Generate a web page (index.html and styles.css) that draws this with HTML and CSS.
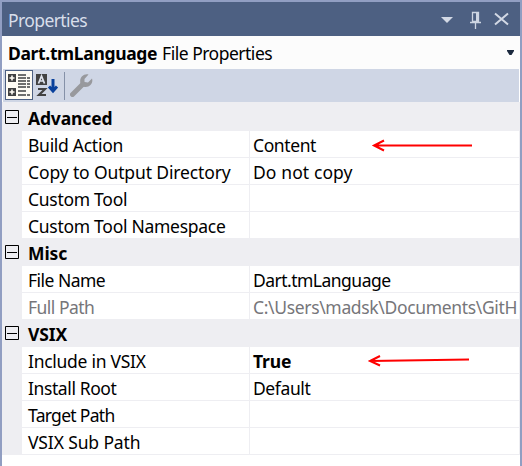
FILE: index.html
```html
<!DOCTYPE html>
<html lang="en">
<head>
<meta charset="utf-8">
<title>Properties</title>
<link rel="stylesheet" href="styles.css">
</head>
<body>
<main class="window">
  <header class="titlebar">
    <h1 class="title">Properties</h1>
    <svg class="controls" width="70" height="18" viewBox="0 0 70 18">
      <path d="M1 6h12L7 12z" fill="#d3d9e5"/>
      <path d="M32.500 1.500h6v9h-6zM30 11.500h11M35.500 12v6" fill="none" stroke="#cdd5e3" stroke-width="1.3"/>
      <path d="M36 1h3v10h-3z" fill="#cdd5e3"/>
      <path d="M55 2.500L68 13.500M68 2.500L55 13.500" stroke="#d3d9e5" stroke-width="2"/>
    </svg>
  </header>
  <div class="selector">
    <span class="object"><b>Dart.tmLanguage</b><span class="kind">File Properties</span></span>
    <svg class="drop" width="7" height="5" viewBox="0 0 7 5"><path d="M0 0h7v1L4.500 5h-2L0 1z" fill="#1b293e"/></svg>
  </div>
  <div class="toolbar">
    <span class="tool selected">
      <svg width="22" height="22" viewBox="0 0 22 22">
        <path d="M0 0h8v8H0zM0 14h8v8H0z" fill="#424242"/>
        <path d="M1.500 4h5M4 1.500v5M1.500 18h5M4 15.500v5" stroke="#fffcf4" stroke-width="1.6"/>
        <path d="M10 1h8M10 4h8M10 7h8M10 10h8M10 13h8M10 17h8M10 21h8" stroke="#424242" stroke-width="1.7"/>
        <path d="M19 4h3M19 7h3M19 10h3M19 13h3M19 21h3" stroke="#424242" stroke-width="1.7"/>
      </svg>
    </span>
    <span class="tool">
      <svg width="23" height="24" viewBox="0 0 23 24">
        <path d="M0 0h11v11H0z" fill="#424242"/>
        <path d="M2.500 9.500L5.500 2L8.500 9.500M3.500 7h4" fill="none" stroke="#dfe3ec" stroke-width="1.7"/>
        <path d="M2 15h7L3 21h7" fill="none" stroke="#424242" stroke-width="2.2"/>
        <path d="M17 5v12M13 12.500l4 4.500 4-4.500" fill="none" stroke="#08409c" stroke-width="3"/>
      </svg>
    </span>
    <i class="separator"></i>
    <svg class="wrench" width="23" height="23" viewBox="0 0 23 23"><path d="M2.500 20.500L13 10" fill="none" stroke="#98999d" stroke-width="5" stroke-linecap="round"/><path d="M18.500 0.500C13 -.5 9 4 10.500 9.500Q11.500 13 15 13C20 13.500 23.500 9 22 4.500L18 8.500L14.500 8L14.500 5z" fill="#98999d"/></svg>
  </div>
  <div class="grid">
    <h2 class="category"><svg class="toggle" width="14" height="14" viewBox="0 0 14 14"><path d="M.5.5h13v13H.5zM2 7.500h10" fill="none" stroke="#000"/></svg>Advanced</h2>
    <div class="row"><span class="name">Build Action</span><span class="value tight">Content<svg class="arrow" width="102" height="14" viewBox="0 0 102 14"><path d="M3 7.500h98M13 2.500L3 7.500L13 12.500" fill="none" stroke="#f00" stroke-width="2"/></svg></span></div>
    <div class="row"><span class="name wide">Copy to Output Directory</span><span class="value wider">Do not copy</span></div>
    <div class="row"><span class="name">Custom Tool</span><span class="value"></span></div>
    <div class="row"><span class="name">Custom Tool Namespace</span><span class="value"></span></div>
    <h2 class="category misc"><svg class="toggle" width="14" height="14" viewBox="0 0 14 14"><path d="M.5.5h13v13H.5zM2 7.500h10" fill="none" stroke="#000"/></svg>Misc</h2>
    <div class="row"><span class="name tighter">File Name</span><span class="value tighter">Dart.tmLanguage</span></div>
    <div class="row readonly"><span class="name tighter">Full Path</span><span class="value path">C:\Users\madsk\Documents\GitH</span></div>
    <h2 class="category misc"><svg class="toggle" width="14" height="14" viewBox="0 0 14 14"><path d="M.5.5h13v13H.5zM2 7.500h10" fill="none" stroke="#000"/></svg>VSIX</h2>
    <div class="row"><span class="name">Include in VSIX</span><span class="value wide"><b>True</b><svg class="arrow low" width="104" height="14" viewBox="0 0 104 14"><path d="M3 8L102 6.500M13 3L3 8L13 12.500" fill="none" stroke="#f00" stroke-width="2"/></svg></span></div>
    <div class="row"><span class="name tight">Install Root</span><span class="value tight">Default</span></div>
    <div class="row"><span class="name tightest">Target Path</span><span class="value"></span></div>
    <div class="row"><span class="name wide">VSIX Sub Path</span><span class="value"></span></div>
  </div>
</main>
</body>
</html>
```
FILE: styles.css
```css
* { box-sizing: border-box; }
body {
  margin: 0;
  font: 17.5px/26px "Noto Sans", "Open Sans", sans-serif;
  letter-spacing: -0.28px;
  color: #000;
  background: #fff;
}
.window {
  width: 522px;
  height: 466px;
  border: 2px solid #919ec2;
  border-bottom: 0;
  background: #fff;
  overflow: hidden;
}
.titlebar {
  display: flex;
  justify-content: space-between;
  height: 34px;
  padding: 5px 10px 0 6px;
  background: #4d6082;
}
.title { margin: 0; font-size: 17.5px; font-weight: 400; line-height: 26px; letter-spacing: -0.6px; color: #d8deea; }
.controls { margin-top: 4px; }
.selector {
  display: flex;
  justify-content: space-between;
  align-items: center;
  height: 33px;
  padding: 0 6px 0 6px;
  background: #fcfcfc;
}
.object { display: flex; gap: 5px; letter-spacing: -0.35px; }
.kind { letter-spacing: -0.5px; }
.toolbar {
  display: flex;
  height: 33px;
  margin: 0 1px;
  padding-left: 2px;
  background: #cfd6e5;
}
.tool { width: 28px; height: 30px; margin-top: 1px; }
.tool svg { display: block; }
.selected { padding: 3px 2px; border: 1px solid #4d6082; background: #fffcf4; }
.tool + .tool { padding: 4px 3px; }
.separator { width: 1px; height: 28px; margin: 3px 5px 0 3px; background: #8591a8; }
.wrench { margin-top: 5px; }
.grid { border: solid #eeeef2; border-width: 2px 1px 0 0; }
.category {
  display: flex;
  height: 27px;
  margin: 0;
  padding-left: 3px;
  font-size: 17.5px;
  font-weight: 700;
  line-height: 29px;
  letter-spacing: -0.15px;
  background: #eeeef2;
}
.misc { letter-spacing: -0.1px; }
.toggle { margin: 6px 9px 0 0; }
.row {
  display: grid;
  grid-template-columns: 227px 1fr;
  gap: 1px;
  height: 27px;
  padding: 0 0 1px 20px;
  background: #eeeef2;
}
.name, .value { background: #fff; white-space: nowrap; line-height: 29px; height: 26px; }
.name { padding-left: 6px; }
.value { position: relative; padding-left: 3px; }
.wider { letter-spacing: 0.1px; }
.wide { letter-spacing: -0.13px; }
.tight { letter-spacing: -0.4px; }
.tighter { letter-spacing: -0.52px; }
.tightest { letter-spacing: -0.7px; }
.path { letter-spacing: -0.34px; }
.readonly { color: #76767a; }
.arrow { position: absolute; left: 121px; top: 7px; }
.low { left: 117px; top: 6px; }
```
